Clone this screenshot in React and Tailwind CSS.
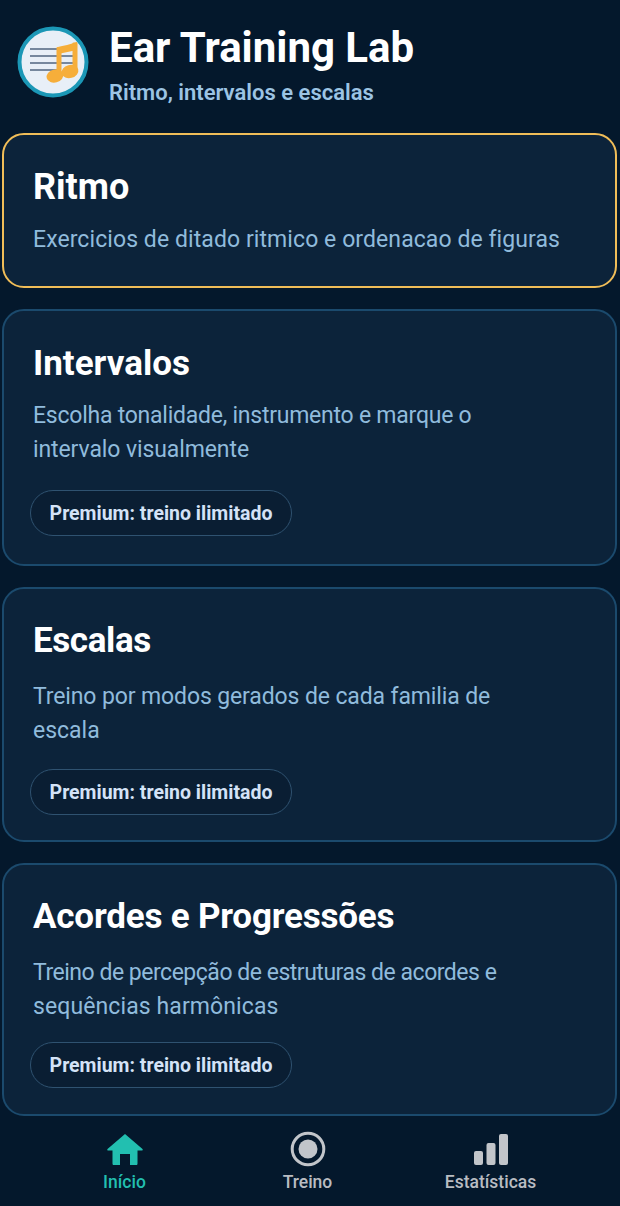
import React from "react";

const cards = [
  {
    title: "Ritmo",
    titleClass: "text-[36px]",
    desc: [{ text: "Exercicios de ditado ritmico e ordenacao de figuras", cls: "tracking-[0.08px]" }],
    active: true,
    cls: "h-[155px] pt-[27px]",
    descMt: "mt-[11px]",
  },
  {
    title: "Intervalos",
    titleClass: "text-[35px]",
    desc: [
      { text: "Escolha tonalidade, instrumento e marque o", cls: "tracking-[-0.24px]" },
      { text: "intervalo visualmente", cls: "tracking-[-0.1px]" },
    ],
    premium: true,
    cls: "h-[257px] pt-[28px]",
    descMt: "mt-[10px]",
    chipMt: "mt-[23px]",
  },
  {
    title: "Escalas",
    titleClass: "text-[35px] tracking-[-0.4px]",
    desc: [
      { text: "Treino por modos gerados de cada familia de", cls: "tracking-[-0.12px]" },
      { text: "escala", cls: "" },
    ],
    premium: true,
    cls: "h-[255px] pt-[27px]",
    descMt: "mt-[14px]",
    chipMt: "mt-[21px]",
  },
  {
    title: "Acordes e Progressões",
    titleClass: "text-[35px] tracking-[-0.2px]",
    desc: [
      { text: "Treino de percepção de estruturas de acordes e", cls: "tracking-[-0.48px]" },
      { text: "sequências harmônicas", cls: "tracking-[0.1px]" },
    ],
    premium: true,
    cls: "h-[253px] pt-[27px]",
    descMt: "mt-[14px]",
    chipMt: "mt-[18px]",
  },
];

const AppLogo = () => (
  <svg width="72" height="72" viewBox="0 0 72 72" className="shrink-0">
    <circle cx="36" cy="36" r="33.500" fill="#e8eff7" stroke="#1b97b6" strokeWidth="4" />
    <g stroke="#51647f" strokeWidth="1.500">
      <line x1="13" y1="23" x2="44" y2="23" />
      <line x1="13" y1="30" x2="57" y2="30" />
      <line x1="13" y1="37" x2="57" y2="37" />
      <line x1="13" y1="44" x2="40" y2="44" />
    </g>
    <g fill="#f6ae3a">
      <path d="M41 21 C46 20 54 18 60 16 L60 24 L41 28 Z" />
      <rect x="39.500" y="21" width="5" height="30" rx="1" />
      <rect x="55.500" y="16.500" width="5" height="29" rx="1" />
      <ellipse cx="38" cy="50" rx="8.500" ry="6.500" transform="rotate(-15 38 50)" />
      <ellipse cx="53" cy="45.500" rx="8.500" ry="6.500" transform="rotate(-15 53 45.500)" />
    </g>
  </svg>
);

const HomeIcon = () => (
  <svg width="36" height="31" viewBox="0 0 36 31" fill="#22bfb0">
    <path d="M18 0 L35.500 15 C36 15.800 35.700 16.500 34.800 16.500 L30.500 16.500 L30.500 29.500 C30.500 30.500 30 31 29 31 L23 31 L23 20 L13 20 L13 31 L7 31 C6 31 5.500 30.500 5.500 29.500 L5.500 16.500 L1.200 16.500 C0.300 16.500 0 15.800 0.500 15 Z" />
  </svg>
);

const TargetIcon = () => (
  <svg width="36" height="36" viewBox="0 0 36 36">
    <circle cx="18" cy="18" r="15.800" fill="none" stroke="#c2c5ca" strokeWidth="3" />
    <circle cx="18" cy="18" r="9.500" fill="#c2c5ca" />
  </svg>
);

const BarsIcon = () => (
  <svg width="34" height="31" viewBox="0 0 34 31" fill="#c2c5ca">
    <rect x="0" y="17" width="9" height="14" rx="2" />
    <rect x="12.500" y="9" width="9" height="22" rx="2" />
    <rect x="25" y="0" width="9" height="31" rx="2" />
  </svg>
);

const Card = ({ card }) => (
  <div
    className={`${card.cls} shrink-0 rounded-[22px] border-2 bg-[#0c233a] pl-[29px] pr-4 ${
      card.active ? "border-[#f0bd58]" : "border-[#1b4a6d]"
    }`}
  >
    <h2 className={`${card.titleClass} font-bold leading-[50px] text-white`}>
      {card.title}
    </h2>
    <div className={`${card.descMt} text-[23px] leading-[34px] text-[#90bbdc]`}>
      {card.desc.map((line) => (
        <div key={line.text} className={line.cls}>
          {line.text}
        </div>
      ))}
    </div>
    {card.premium && (
      <div
        className={`${card.chipMt} -ml-[3px] flex h-[46px] w-[262px] items-center justify-center rounded-full border-[1.500px] border-[#2f5270] bg-[#0a1e33] pt-[1px] text-[19.500px] font-bold text-[#d4e3f7]`}
      >
        Premium: treino ilimitado
      </div>
    )}
  </div>
);

const NavItem = ({ icon, label, color }) => (
  <div className="flex w-[183px] flex-col items-center">
    <div className="flex h-[36px] items-center">{icon}</div>
    <span className={`mt-[3px] text-[17.500px] leading-[24px] font-medium ${color}`}>{label}</span>
  </div>
);

export default function App() {
  return (
    <div
      className="flex h-[1206px] w-[620px] flex-col overflow-hidden bg-[#04182c]"
      style={{ fontFamily: "Roboto, sans-serif" }}
    >
      <header className="flex h-[133px] shrink-0 items-start pl-[17px] pt-[26px]">
        <AppLogo />
        <div className="ml-[20px] -mt-[2px]">
          <h1 className="text-[42px] font-bold leading-[48px] text-white">Ear Training Lab</h1>
          <p className="mt-[6px] text-[22px] font-semibold leading-[30px] text-[#9cc4e4]">
            Ritmo, intervalos e escalas
          </p>
        </div>
      </header>

      <main className="flex flex-col gap-[21px] pl-[2px] pr-[3px]">
        {cards.map((card) => (
          <Card key={card.title} card={card} />
        ))}
      </main>

      <nav className="mt-[15px] flex pl-[33px]">
        <NavItem icon={<HomeIcon />} label="Início" color="text-[#22bfb0]" />
        <NavItem icon={<TargetIcon />} label="Treino" color="text-[#b9bcc2]" />
        <NavItem icon={<BarsIcon />} label="Estatísticas" color="text-[#b9bcc2]" />
      </nav>
    </div>
  );
}
